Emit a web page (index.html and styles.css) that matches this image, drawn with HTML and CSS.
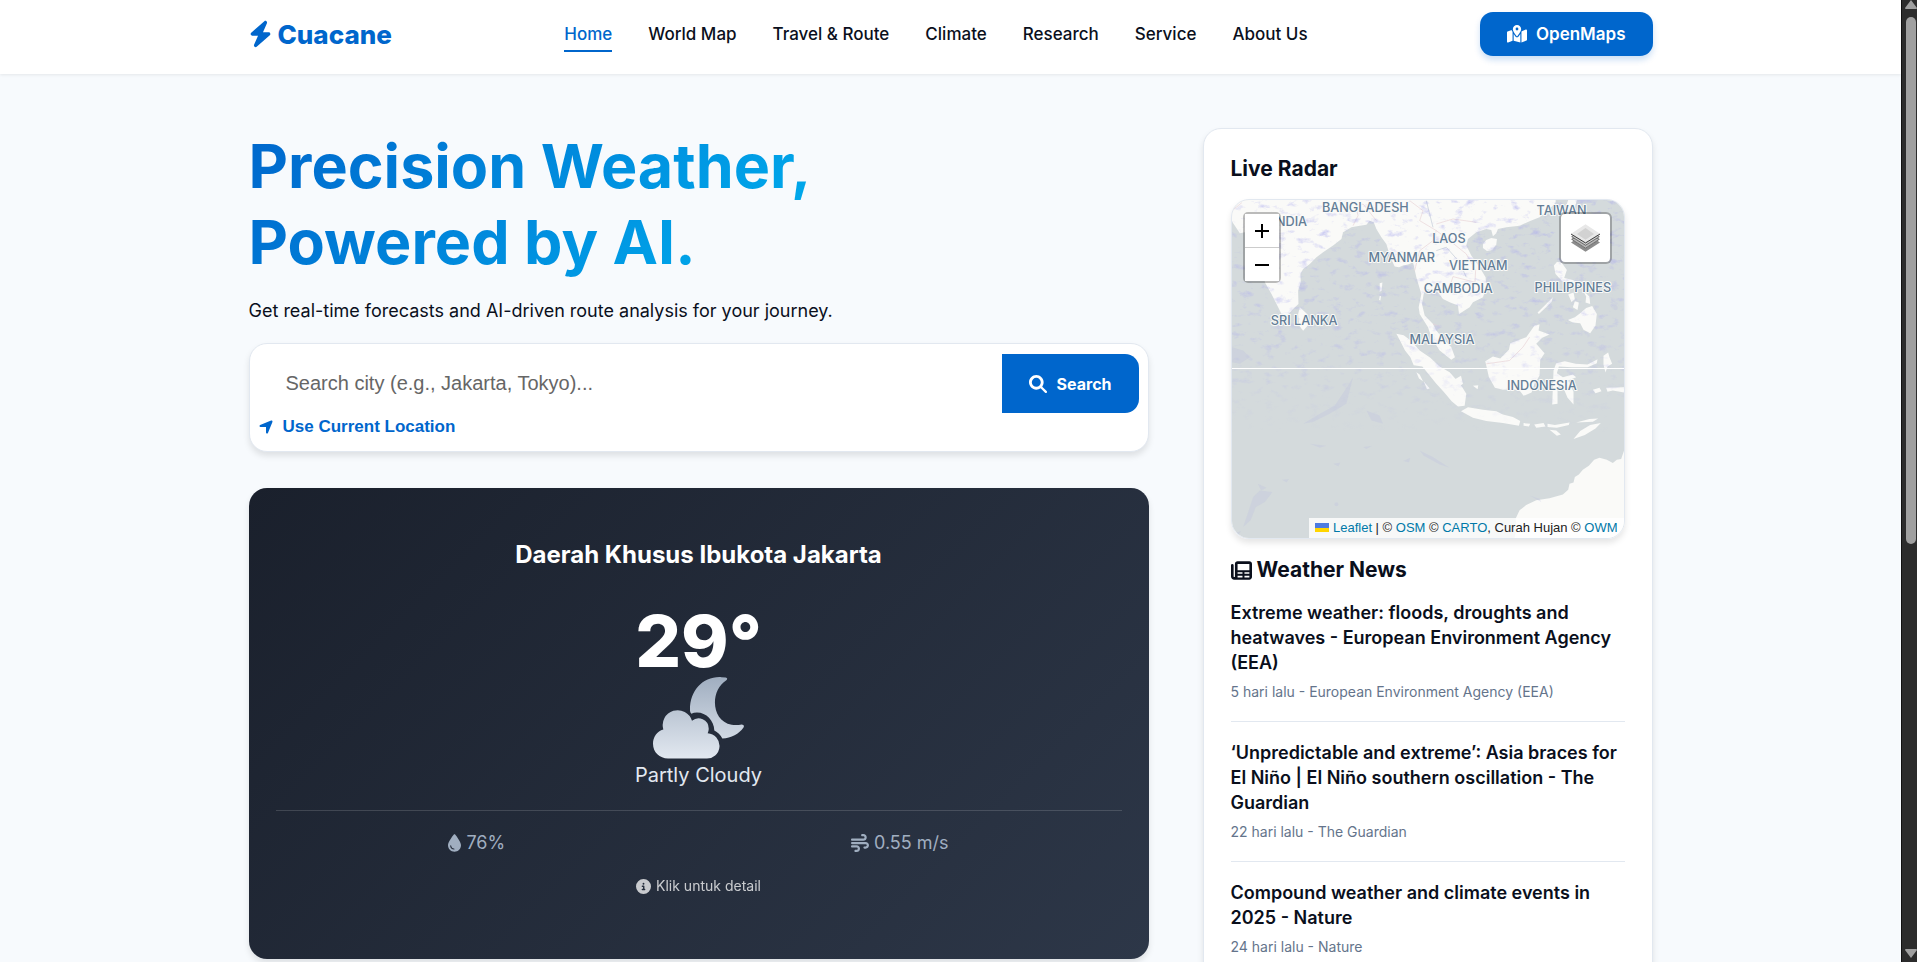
FILE: index.html
```html
<!DOCTYPE html>
<html lang="en">
<head>
    <meta charset="UTF-8">
    <meta name="viewport" content="width=device-width, initial-scale=1.0">
    <title>Cuacane</title>
    <link rel="stylesheet" href="styles.css">
</head>
<body>
<div class="page">
    <!-- navbar -->
    <header class="navbar">
        <div class="container navbar-inner">
            <a class="logo" href="#">
                <svg class="logo-icon" viewBox="0 0 448 512"><path d="M349.4 44.6c5.9-13.7 1.5-29.7-10.6-38.5s-28.6-8-39.9 1.8l-256 224c-10 8.8-13.6 22.9-8.9 35.3S50.7 288 64 288H175.5L98.6 467.4c-5.9 13.7-1.5 29.7 10.6 38.5s28.6 8 39.9-1.8l256-224c10-8.8 13.6-22.9 8.9-35.3s-16.6-20.7-30-20.7H272.5L349.4 44.6z"/></svg>
                Cuacane
            </a>
            <nav class="nav-links">
                <a class="active" href="#">Home</a>
                <a href="#">World Map</a>
                <a href="#">Travel &amp; Route</a>
                <a href="#">Climate</a>
                <a href="#">Research</a>
                <a href="#">Service</a>
                <a href="#">About Us</a>
            </nav>
            <a class="btn-maps" href="#">
                <svg class="maps-icon" viewBox="0 0 576 512"><path d="M408 120c0 54.6-73.1 151.9-105.2 192c-7.7 9.6-22 9.6-29.6 0C241.1 271.9 168 174.6 168 120C168 53.7 221.7 0 288 0s120 53.7 120 120zm8 80.4c3.5-6.9 6.7-13.8 9.6-20.6c.5-1.2 1-2.5 1.5-3.7l116-46.4C558.9 123.4 576 135 576 152V422.8c0 9.8-6 18.6-15.1 22.3L416 503V200.4zM137.6 138.3c2.4 14.1 7.2 28.3 12.8 41.5c2.9 6.8 6.1 13.7 9.6 20.6V451.8L32.9 502.7C17.1 509 0 497.4 0 480.4V209.6c0-9.8 6-18.6 15.1-22.3l122.6-49zM327.8 332c13.9-17.4 35.7-45.7 56.2-77V504.3L192 449.4V255c20.5 31.3 42.3 59.6 56.2 77c20.5 25.6 59.1 25.6 79.6 0zM288 152a40 40 0 1 0 0-80 40 40 0 1 0 0 80z"/></svg>
                OpenMaps
            </a>
        </div>
    </header>

    <main class="container layout">
        <section class="main-col">
            <h1>Precision Weather,<br>Powered by AI.</h1>
            <p class="subtitle">Get real-time forecasts and AI-driven route analysis for your journey.</p>

            <!-- search -->
            <form class="search-box">
                <div class="search-row">
                    <input type="text" aria-label="Search city" placeholder="Search city (e.g., Jakarta, Tokyo)...">
                    <button class="btn-search" type="button">
                        <svg class="icon-18" viewBox="0 0 512 512"><path d="M416 208c0 45.9-14.9 88.3-40 122.7L502.6 457.4c12.5 12.5 12.5 32.8 0 45.3s-32.8 12.5-45.3 0L330.7 376c-34.4 25.2-76.8 40-122.7 40C93.1 416 0 322.9 0 208S93.1 0 208 0S416 93.1 416 208zM208 336a128 128 0 1 0 0-256 128 128 0 1 0 0 256z"/></svg>
                        Search
                    </button>
                </div>
                <button class="btn-location" type="button">
                    <svg class="location-icon" viewBox="0 0 448 512"><path d="M429.6 92.1c4.9-11.9 2.1-25.6-7-34.7s-22.8-11.9-34.7-7l-352 144c-14.2 5.8-22.2 20.8-19.3 35.8s16.1 25.8 31.4 25.8H224V432c0 15.3 10.8 28.4 25.8 31.4s30-5.1 35.8-19.3l144-352z"/></svg>
                    Use Current Location
                </button>
            </form>

            <!-- current weather -->
            <article class="weather-card">
                <h2>Daerah Khusus Ibukota Jakarta</h2>
                <div class="temp">29°</div>
                <svg class="weather-icon" viewBox="0 0 273 245">
                    <defs>
                        <linearGradient id="sky" x1="0" y1="0" x2="0" y2="245" gradientUnits="userSpaceOnUse">
                            <stop offset="0" stop-color="#a0aec0"/>
                            <stop offset="1" stop-color="#e2e8f0"/>
                        </linearGradient>
                    </defs>
                    <path fill="url(#sky)" d="M45 244H159A38 38 0 0 0 164 168Q168 160 167 153A30 30 0 0 0 117 131A44 44 0 0 0 31 157C12 162 0 180 0 200C0 226 20 244 45 244Z"/>
                    <path fill="url(#sky)" d="M218 1Q226 3 220 9C172 38 172 130 236 143Q252 145 266 142Q275 142 272 150C258 170 235 183 208 184C203 174 194 165 184 160C183 130 160 106 132 106Q122 106 115 110Q111 106 111 100C110 40 150 -3 205 0Z"/>
                </svg>
                <p class="condition">Partly Cloudy</p>
                <div class="stats">
                    <span><svg class="drop-icon" viewBox="0 0 384 512"><path d="M192 512C86 512 0 426 0 320C0 228.8 130.2 57.7 166.6 11.7C172.6 4.2 181.5 0 191.1 0h1.8c9.6 0 18.5 4.2 24.5 11.7C253.8 57.7 384 228.8 384 320c0 106-86 192-192 192zM96 336c0-8.8-7.2-16-16-16s-16 7.2-16 16c0 61.9 50.1 112 112 112c8.8 0 16-7.2 16-16s-7.2-16-16-16c-44.2 0-80-35.8-80-80z"/></svg>76%</span>
                    <span><svg class="icon-18" viewBox="0 0 512 512"><path d="M288 32c0 17.7 14.3 32 32 32h32c17.7 0 32 14.3 32 32s-14.3 32-32 32H32c-17.7 0-32 14.3-32 32s14.3 32 32 32H352c53 0 96-43 96-96s-43-96-96-96H320c-17.7 0-32 14.3-32 32zm64 352c0 17.7 14.3 32 32 32h32c53 0 96-43 96-96s-43-96-96-96H32c-17.7 0-32 14.3-32 32s14.3 32 32 32H416c17.7 0 32 14.3 32 32s-14.3 32-32 32H384c-17.7 0-32 14.3-32 32zM128 512h32c53 0 96-43 96-96s-43-96-96-96H32c-17.7 0-32 14.3-32 32s14.3 32 32 32H160c17.7 0 32 14.3 32 32s-14.3 32-32 32H128c-17.7 0-32 14.3-32 32s14.3 32 32 32z"/></svg>0.55 m/s</span>
                </div>
                <p class="hint"><svg class="info-icon" viewBox="0 0 512 512"><path d="M256 512A256 256 0 1 0 256 0a256 256 0 1 0 0 512zM216 336h24V272H216c-13.3 0-24-10.7-24-24s10.7-24 24-24h48c13.3 0 24 10.7 24 24v88h8c13.3 0 24 10.7 24 24s-10.7 24-24 24H216c-13.3 0-24-10.7-24-24s10.7-24 24-24zm40-208a32 32 0 1 1 0 64 32 32 0 1 1 0-64z"/></svg>Klik untuk detail</p>
            </article>
        </section>

        <!-- sidebar -->
        <aside class="sidebar">
            <h3>Live Radar</h3>
            <div class="map">
                <svg class="map-tiles" viewBox="36 28 1178 1015" preserveAspectRatio="xMidYMid slice">
                    <defs>
                        <filter id="rain" x="0" y="0" width="100%" height="100%" color-interpolation-filters="sRGB">
                            <feTurbulence type="fractalNoise" baseFrequency="0.03 0.05" numOctaves="4" seed="8"/>
                            <feColorMatrix values="0 0 0 0 0.68  0 0 0 0 0.68  0 0 0 0 0.93  3 0 0 0 -1.7"/>
                            <feComposite in2="SourceGraphic" operator="in"/>
                        </filter>
                        <linearGradient id="fade" x1="0" y1="0" x2="0" y2="1">
                            <stop offset="0" stop-color="#000"/>
                            <stop offset=".6" stop-color="#000" stop-opacity=".7"/>
                            <stop offset="1" stop-color="#000" stop-opacity="0"/>
                        </linearGradient>
                    </defs>
                    <rect x="0" y="0" width="1300" height="1100" fill="#d4dadc"/>
                    <g fill="#fafaf8">
                        <path d="M0 0H1010L1008 36L990 55L960 80L930 92L900 105L860 110L835 115L830 128L820 137L815 118L800 115L770 125L745 145L740 165L755 195L780 230L798 260L800 290L790 320L760 335L750 350L718 370L715 345L690 335L670 325L655 305L640 300L620 295L612 310L607 340L615 375L640 400L650 420L670 445L695 470L706 500L695 508L660 480L635 440L625 410L600 370L597 350L605 310L590 260L580 215L565 222L550 225L538 230L525 228L512 200L500 160L485 140L470 115L462 95L450 90L440 102L420 105L395 110L370 125L365 145L340 165L310 185L290 200L270 220L250 235L242 250L243 275L235 300L236 340L220 355L205 372L190 380L175 350L155 310L135 275L132 210L110 150L90 122L60 128L36 92L0 90Z"/>
                        <path d="M240 350L262 370L268 400L250 421L238 405L235 370Z"/>
                        <path d="M790 160L800 148L815 142L832 145L830 162L818 178L802 181L790 172Z"/>
                        <path d="M1003 225L1012 214L1026 216L1042 238L1034 262L1060 268L1088 282L1070 284L1050 276L1028 272L1008 250Z"/>
                        <path d="M1045 388L1066 380L1082 368L1100 352L1118 346L1132 370L1128 405L1112 428L1092 418L1082 398L1060 396Z"/>
                        <path d="M1046 312L1062 306L1066 326L1056 334ZM1066 332L1078 336L1074 358L1060 350ZM1090 300L1110 318L1112 340L1098 336L1100 318ZM1000 320L996 334L958 370L954 366L980 340Z"/>
                        <path d="M1046 28H1072L1064 58L1050 66L1040 46Z"/>
                        <path d="M530 430L552 434L576 452L600 480L632 502L660 528L690 545L712 570L728 590L740 610L735 646L715 648L696 632L672 604L650 580L630 555L608 528L582 524L572 500L556 480L542 452Z"/>
                        <path d="M724 662L745 650L790 658L830 662L850 672L880 680L902 692L898 706L850 698L800 692L760 682Z"/>
                        <path d="M912 698L932 700L928 708L912 706ZM944 702L972 698L978 708L950 712ZM984 700L1006 704L1050 696L1048 704L1012 712L984 710ZM990 718L1010 720L1024 732L1012 736ZM1062 746L1082 722L1112 704L1144 698L1128 714L1096 734ZM1070 696L1110 686L1136 684L1120 694Z"/>
                        <path d="M797 512L820 498L842 504L868 478L872 458L900 448L920 440L945 405L960 402L957 420L990 432L968 442L950 460L975 488L962 508L960 555L944 582L936 606L912 616L900 600L880 596L850 598L826 592L808 560Z"/>
                        <path d="M1002 540L1010 518L1036 512L1068 520L1104 522L1134 506L1132 518L1104 530L1056 530L1018 528L1012 548L1030 560L1060 552L1070 560L1046 570L1062 604L1062 642L1044 622L1034 598L1022 580L1014 592L1014 640L998 642L1000 590Z"/>
                        <path d="M1152 496L1166 486L1170 500L1178 520L1164 528L1158 546L1152 522ZM706 566L724 556L730 580L714 592ZM760 586L776 584L774 596ZM1120 598L1140 592L1146 602L1128 608ZM1160 592L1214 590V606L1180 600L1164 604ZM590 545L600 552L610 572L598 564ZM612 572L630 594L622 596Z"/>
                        <path d="M480 278L488 276L486 300L480 304ZM480 316L484 316L482 330L478 328Z"/>
                        <path d="M1300 770L1214 780L1205 806L1192 808L1180 818L1162 808L1140 802L1124 808L1108 826L1090 838L1078 852L1066 860L1062 876L1050 880L1046 898L1030 912L990 924L950 930L920 944L900 960L888 985L892 1010L885 1043V1100H1300Z"/>
                    </g>
                    <g fill="none" stroke="#e9d3d6" stroke-width="2">
                        <path d="M400 105L415 75L408 50L430 40L470 90M570 30L610 60L600 90L650 120L640 150L600 180L585 240M650 100L700 85L770 95M650 120L690 150L740 190L768 240L766 275L700 258L690 290"/>
                        <path d="M36 60L66 36M800 520L870 510L910 470L930 440M640 400L660 408"/>
                    </g>
                    <path fill="none" stroke="#c3cbd6" stroke-width="2" d="M620 30L640 110M650 180L680 170L720 215L740 260"/>
                    <rect x="36" y="28" width="1178" height="700" fill="url(#fade)" opacity=".6" filter="url(#rain)"/>
                    <g fill="#b9bde0" opacity=".25">
                        <path d="M250 700L300 670L345 645L375 600L400 560L380 640L330 670L280 695ZM36 470L70 480L90 500L60 520L36 515ZM440 660L480 675L490 700L455 690ZM600 780L640 800L690 832L660 822L612 796ZM100 920L120 900L158 905L135 935L108 950L92 990L70 1010ZM186 868L208 866L200 876ZM340 820L362 816L356 828ZM430 770L458 766L440 776ZM550 812L572 802L568 816ZM270 760L320 766L300 772ZM40 1030L64 1022L50 1040ZM114 880L140 892L124 900ZM930 915L960 925L966 936Z"/>
                        <circle cx="1188" cy="352" r="7"/>
                        <circle cx="350" cy="942" r="6"/>
                    </g>
                    <path stroke="#fff" stroke-width="3" d="M0 534H1300"/>
                    <g class="map-labels">
                        <text x="437" y="63">BANGLADESH</text>
                        <text x="210" y="107">INDIA</text>
                        <text x="688" y="157">LAOS</text>
                        <text x="546" y="213">MYANMAR</text>
                        <text x="776" y="238">VIETNAM</text>
                        <text x="716" y="306">CAMBODIA</text>
                        <text x="1026" y="72">TAIWAN</text>
                        <text x="1060" y="304">PHILIPPINES</text>
                        <text x="253" y="404">SRI LANKA</text>
                        <text x="667" y="461">MALAYSIA</text>
                        <text x="967" y="598">INDONESIA</text>
                    </g>
                </svg>
                <div class="zoom-control">
                    <button type="button" aria-label="Zoom in"><svg viewBox="0 0 14 14"><path d="M7 0V14M0 7H14"/></svg></button>
                    <button type="button" aria-label="Zoom out"><svg viewBox="0 0 14 14"><path d="M0 7H14"/></svg></button>
                </div>
                <button class="layers-control" type="button" aria-label="Layers">
                    <svg viewBox="0 0 88 84">
                        <path fill="#8c8c8c" d="M0 56L44 84L88 56L80 50L44 74L8 50Z"/>
                        <path fill="#b5b5b5" stroke="#3c3c3c" stroke-width="2" d="M2 46L44 73L86 46L44 20Z"/>
                        <path fill="#d0d0d0" stroke="#3c3c3c" stroke-width="2" d="M2 38L44 64L86 38L44 12Z"/>
                        <path fill="#e8e8e8" d="M0 29L44 0L88 29L44 56Z"/>
                        <path fill="#d2d2d2" d="M18 30L44 12L70 30L44 47Z"/>
                        <path fill="none" stroke="#3c3c3c" stroke-width="3" d="M0 30L44 57L88 30"/>
                    </svg>
                </button>
                <div class="attribution">
                    <a href="#"><svg class="flag" viewBox="0 0 14 9"><path fill="#4c7be1" d="M0 0H14V5H0Z"/><path fill="#ffd500" d="M0 5H14V9H0Z"/></svg> Leaflet</a> | © <a href="#">OSM</a> © <a href="#">CARTO</a>, Curah Hujan © <a href="#">OWM</a>
                </div>
            </div>

            <h3 class="news-heading">
                <svg class="news-icon" viewBox="0 0 512 512"><path fill-rule="evenodd" d="M160 32H448C483 32 512 61 512 96V416C512 451 483 480 448 480H80C36 480 0 444 0 400V128Q0 96 32 96Q64 96 64 128V400Q64 416 80 416Q96 416 96 400V96C96 61 125 32 160 32ZM160 96V248H448V96ZM160 296V336H280V296ZM328 296V336H448V296ZM160 384V424H280V384ZM328 384V424H448V384Z"/></svg>
                Weather News
            </h3>
            <ul class="news-list">
                <li>
                    <a href="#">Extreme weather: floods, droughts and heatwaves - European Environment Agency (EEA)</a>
                    <p>5 hari lalu - European Environment Agency (EEA)</p>
                </li>
                <li>
                    <a href="#">‘Unpredictable and extreme’: Asia braces for El Niño | El Niño southern oscillation - The Guardian</a>
                    <p>22 hari lalu - The Guardian</p>
                </li>
                <li>
                    <a href="#">Compound weather and climate events in 2025 - Nature</a>
                    <p>24 hari lalu - Nature</p>
                </li>
            </ul>
        </aside>
    </main>
</div>

<div class="scrollbar">
    <svg viewBox="0 0 12 9"><path d="M6 0L12 8Q12 9 11 9H1Q0 9 0 8Z"/></svg>
    <div class="track"><div class="thumb"></div></div>
    <svg viewBox="0 0 12 9"><path d="M6 9L12 1Q12 0 11 0H1Q0 0 0 1Z"/></svg>
</div>
</body>
</html>
```
FILE: styles.css
```css
* {
    box-sizing: border-box;
    margin: 0;
    padding: 0;
}
body {
    display: flex;
    height: 100vh;
    overflow: hidden;
    font-family: Inter, "Noto Sans", sans-serif;
    font-size: 18px;
    line-height: 29px;
    color: #0a0f1c;
    background-color: #f7fafd;
}
a {
    color: inherit;
    text-decoration: none;
}
button {
    border: none;
    cursor: pointer;
}
svg {
    display: block;
    fill: currentColor;
}
.page {
    flex: 1;
    min-width: 0;
    overflow: hidden;
}
.container {
    width: 100%;
    max-width: 1404px;
    margin: 0 auto;
}
.icon-18 {
    width: 18px;
    height: 18px;
}

/* navbar */
.navbar {
    padding: 12px 0 18px;
    background-color: #fff;
    box-shadow: 0 1px 3px rgba(0, 0, 0, 0.08);
}
.navbar-inner {
    display: flex;
    justify-content: space-between;
    align-items: center;
}
.logo {
    display: flex;
    align-items: center;
    gap: 6px;
    font-size: 26px;
    font-weight: 800;
    color: #0066cc;
}
.logo-icon {
    width: 23px;
    height: 28px;
}
.nav-links {
    display: flex;
    gap: 36px;
    font-size: 17px;
    font-weight: 500;
}
.nav-links a {
    padding: 4px 0 1px;
    border-bottom: 2px solid transparent;
}
.nav-links .active {
    color: #0066cc;
    border-color: #0066cc;
}
.btn-maps {
    display: flex;
    align-items: center;
    gap: 9px;
    height: 44px;
    padding: 0 27px;
    border-radius: 13px;
    font-size: 17px;
    font-weight: 600;
    color: #fff;
    background-color: #0066cc;
    box-shadow: 0 4px 6px rgba(0, 102, 204, 0.2);
}
.maps-icon {
    width: 20px;
    height: 18px;
}

/* layout */
.layout {
    display: grid;
    grid-template-columns: 2fr 1fr;
    gap: 54px;
    align-items: start;
    padding-top: 54px;
}
h1 {
    font-size: 61px;
    line-height: 76px;
    font-weight: 700;
    color: transparent;
    background: linear-gradient(135deg, #0066cc, #00d4ff);
    background-clip: text;
    -webkit-background-clip: text;
}
.subtitle {
    margin: 16px 0 18px;
}

/* search */
.search-box {
    padding: 10px 9px 9px;
    border: 1px solid #e2e8f0;
    border-radius: 18px;
    background-color: #fff;
    box-shadow: 0 4px 6px rgba(0, 0, 0, 0.1);
}
.search-row {
    display: flex;
}
.search-row input {
    flex: 1;
    min-width: 0;
    padding: 0 27px;
    border: none;
    outline: none;
    font-family: "Liberation Sans", sans-serif;
    font-size: 20px;
    background: transparent;
}
.search-row input::placeholder {
    color: #666;
}
.btn-search {
    display: flex;
    align-items: center;
    gap: 10px;
    height: 59px;
    padding: 0 27px;
    border-radius: 0 14px 14px 0;
    font-family: inherit;
    font-size: 16px;
    font-weight: 700;
    color: #fff;
    background-color: #0066cc;
}
.btn-location {
    display: flex;
    align-items: center;
    gap: 10px;
    padding: 5px 0 7px;
    font-family: "Liberation Sans", sans-serif;
    font-size: 17px;
    line-height: 17px;
    font-weight: 700;
    color: #0066cc;
    background: none;
}
.location-icon {
    width: 14px;
    height: 16px;
}

/* weather card */
.weather-card {
    display: flex;
    flex-direction: column;
    align-items: center;
    margin-top: 36px;
    padding: 49px 27px 61px;
    border-radius: 18px;
    color: #fff;
    background: linear-gradient(135deg, #1a202c, #2d3748);
    box-shadow: 0 4px 6px rgba(0, 0, 0, 0.1);
}
.weather-card h2 {
    font-size: 24px;
    line-height: 36px;
    font-weight: 700;
}
.temp {
    margin-top: 32px;
    font-size: 72px;
    line-height: 72px;
    font-weight: 800;
}
.weather-icon {
    width: 91px;
    height: 82px;
}
.condition {
    font-size: 20px;
    line-height: 33px;
    color: #e2e8f0;
}
.stats {
    display: flex;
    justify-content: space-around;
    align-self: stretch;
    margin-top: 18px;
    padding-top: 17px;
    border-top: 1px solid rgba(255, 255, 255, 0.15);
    color: #a0aec0;
}
.stats span, .hint {
    display: flex;
    align-items: center;
    gap: 5px;
}
.drop-icon {
    width: 13px;
    height: 18px;
}
.hint {
    margin-top: 17px;
    font-size: 14px;
    line-height: 24px;
    color: #fff;
    opacity: 0.75;
}
.info-icon {
    width: 15px;
    height: 15px;
}

/* sidebar */
.sidebar {
    padding: 24px 27px;
    border: 1px solid #e2e8f0;
    border-radius: 18px;
    background-color: #fff;
    box-shadow: 0 4px 6px rgba(0, 0, 0, 0.1);
}
h3 {
    font-size: 21px;
    line-height: 32px;
    font-weight: 700;
}
.map {
    position: relative;
    height: 340px;
    margin: 14px 0 15px;
    border: 1px solid #e2e8f0;
    border-radius: 18px;
    overflow: hidden;
    box-shadow: 0 4px 6px rgba(0, 0, 0, 0.1);
}
.map-tiles {
    width: 100%;
    height: 100%;
}
.map-labels {
    font-size: 38px;
    font-weight: 500;
    text-anchor: middle;
    fill: #637d96;
    stroke: #fafaf8;
    stroke-width: 6px;
    stroke-linejoin: round;
    paint-order: stroke;
}
.zoom-control {
    position: absolute;
    top: 12px;
    left: 11px;
    width: 38px;
    border: 2px solid rgba(0, 0, 0, 0.25);
    border-radius: 5px;
    background-clip: padding-box;
}
.zoom-control button {
    display: flex;
    align-items: center;
    justify-content: center;
    width: 100%;
    height: 33px;
    background-color: #fff;
}
.zoom-control button:first-child {
    height: 34px;
    border-bottom: 1px solid #ccc;
}
.zoom-control svg {
    width: 14px;
    height: 14px;
    stroke: #000;
    stroke-width: 2;
}
.layers-control {
    position: absolute;
    top: 12px;
    right: 12px;
    padding: 10px;
    border: 2px solid rgba(0, 0, 0, 0.25);
    border-radius: 6px;
    background-color: #fff;
    background-clip: padding-box;
}
.layers-control svg {
    width: 29px;
    height: 28px;
}
.attribution {
    position: absolute;
    right: 0;
    bottom: 0;
    padding: 0 6px;
    font-family: "Liberation Sans", sans-serif;
    font-size: 13px;
    line-height: 20px;
    color: #222;
    background-color: rgba(255, 255, 255, 0.8);
}
.attribution a {
    color: #0078a8;
}
.flag {
    display: inline;
    width: 14px;
    height: 9px;
}
.news-heading {
    display: flex;
    align-items: center;
    gap: 5px;
}
.news-icon {
    width: 21px;
    height: 21px;
}
.news-list {
    list-style: none;
}
.news-list li {
    padding: 18px 0;
    border-bottom: 1px solid #e2e8f0;
}
.news-list li:first-child {
    padding-top: 14px;
}
.news-list a {
    display: block;
    font-weight: 600;
    line-height: 25px;
}
.news-list p {
    margin-top: 5px;
    font-size: 14px;
    line-height: 23px;
    color: #64748b;
}

/* scrollbar */
.scrollbar {
    display: flex;
    flex-direction: column;
    align-items: center;
    gap: 8px;
    width: 16px;
    padding: 0 1px 4px 3px;
    border-left: 1px solid #111;
    background-color: #2c2c2c;
    color: #a0a0a0;
}
.scrollbar svg {
    width: 12px;
    height: 9px;
}
.track {
    flex: 1;
    width: 10px;
}
.thumb {
    height: 57%;
    border-radius: 5px;
    background-color: #a0a0a0;
}
```
